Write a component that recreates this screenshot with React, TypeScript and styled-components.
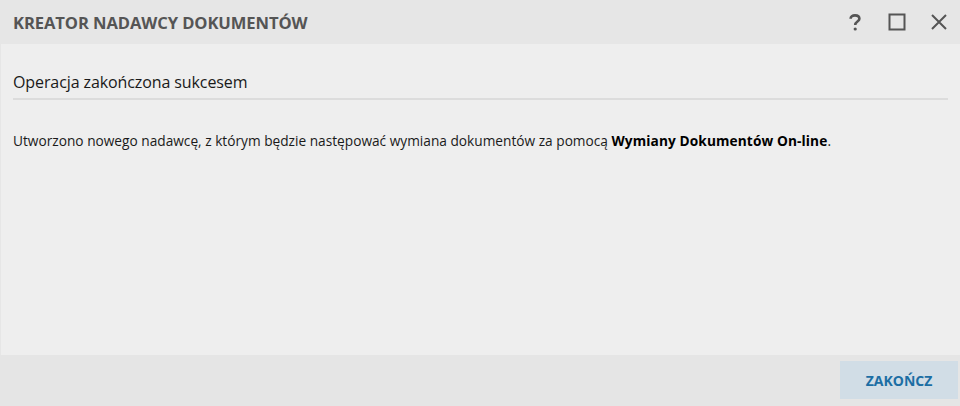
import React from "react";
import styled, { createGlobalStyle } from "styled-components";

const Global = createGlobalStyle`
  *, *::before, *::after { box-sizing: border-box; }
  html, body { margin: 0; padding: 0; }
  body { font-family: "Open Sans", "Noto Sans", sans-serif; background: #eeeeee; }
`;

const Dialog = styled.div`
  width: 960px;
  height: 406px;
  display: flex;
  flex-direction: column;
  background: #eeeeee;
`;

const Header = styled.div`
  height: 44px;
  background: #e6e6e6;
  display: flex;
  align-items: center;
  padding: 0 0 0 13px;
`;

const Title = styled.div`
  flex: 1;
  font-size: 16.6px;
  font-weight: 700;
  color: #555555;
  letter-spacing: -0.1px;
`;

const Tools = styled.div`
  display: flex;
  align-items: center;
  padding-right: 0;
`;

const ToolBtn = styled.div`
  width: 42px;
  height: 44px;
  display: flex;
  align-items: center;
  justify-content: center;
  color: #555555;
`;

const Body = styled.div`
  flex: 1;
  padding: 0 12px;
  display: flex;
  flex-direction: column;
  border-left: 1px solid #e6e6e6;
`;

const Subtitle = styled.div`
  font-size: 16px;
  color: #1a1a1a;
  padding: 27px 0 5px 0;
  letter-spacing: -0.1px;
  border-bottom: 2px solid #dcdcdc;
`;

const Message = styled.p`
  margin: 31px 0 0 0;
  font-size: 13.7px;
  color: #1a1a1a;
  b { font-weight: 700; color: #000; letter-spacing: 0.1px; }
`;

const Footer = styled.div`
  height: 51px;
  background: #e5e5e5;
  display: flex;
  justify-content: flex-end;
  align-items: flex-start;
  padding: 6px 2px 0 0;
`;

const Button = styled.button`
  width: 118px;
  height: 38px;
  border: none;
  background: #d1dde6;
  color: #1c6ea4;
  font-family: "Open Sans", sans-serif;
  font-weight: 700;
  font-size: 14px;
  cursor: pointer;
`;

export default function App() {
  return (
    <>
      <Global />
      <Dialog>
        <Header>
          <Title>KREATOR NADAWCY DOKUMENTÓW</Title>
          <Tools>
            <ToolBtn>
              <svg width="12" height="17" viewBox="0 0 12 17" fill="none" stroke="#555" strokeWidth="2.6" strokeLinecap="butt">
                <path d="M1.6 4.8 C1.6 2.6 3.4 1.4 6 1.4 C8.6 1.4 10.4 2.7 10.4 4.8 C10.4 7.6 6.2 7.6 6.2 11" />
                <circle cx="6.2" cy="15" r="1.6" fill="#555" stroke="none" />
              </svg>
            </ToolBtn>
            <ToolBtn>
              <svg width="18" height="18" viewBox="0 0 18 18" fill="none" stroke="#555" strokeWidth="2">
                <rect x="1.5" y="1.5" width="15" height="15" />
              </svg>
            </ToolBtn>
            <ToolBtn>
              <svg width="16" height="16" viewBox="0 0 16 16" fill="none" stroke="#555" strokeWidth="2">
                <path d="M1 1 L15 15 M15 1 L1 15" />
              </svg>
            </ToolBtn>
          </Tools>
        </Header>
        <Body>
          <Subtitle>Operacja zakończona sukcesem</Subtitle>
          <Message>
            Utworzono nowego nadawcę, z którym będzie następować wymiana dokumentów za pomocą{" "}
            <b>Wymiany Dokumentów On-line</b>.
          </Message>
        </Body>
        <Footer>
          <Button>ZAKOŃCZ</Button>
        </Footer>
      </Dialog>
    </>
  );
}
